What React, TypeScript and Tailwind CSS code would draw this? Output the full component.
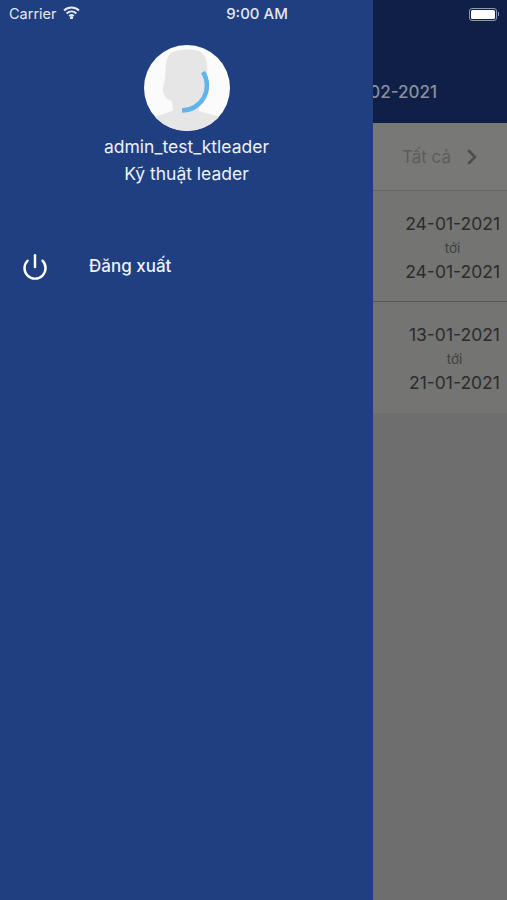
import { ChevronRight, Power } from "lucide-react";

const dateRows = [
  { from: "24-01-2021", to: "24-01-2021" },
  { from: "13-01-2021", to: "21-01-2021" },
];

function StatusBar() {
  return (
    <div className="absolute inset-x-0 top-0 flex h-[28px] items-center justify-between pl-[9px] pr-[8px] text-[#e4e8f0]">
      <div className="flex w-[120px] items-center gap-[7px] text-[14.5px]">
        <span>Carrier</span>
        <svg width="17" height="13" viewBox="0 0 17 13" fill="none" stroke="currentColor" strokeWidth="2" className="-mt-[3px] -ml-[1px]">
          <path d="M1 4.6C5.4.6 11.6.6 16 4.6" />
          <path d="M3.6 7.4c2.9-2.6 6.9-2.6 9.8 0" />
          <path d="M6.2 10c1.4-1.2 3.2-1.2 4.6 0" />
          <circle cx="8.5" cy="11.6" r="0.7" fill="currentColor" />
        </svg>
      </div>
      <span className="ml-[6px] text-[15px] font-medium">9:00 AM</span>
      <div className="flex w-[120px] items-center justify-end">
        <div className="flex h-[13px] w-[28px] items-center rounded-[3px] border border-[#8f9ab5] p-[1px]">
          <div className="h-full w-full rounded-[1.5px] bg-white" />
        </div>
        <div className="ml-[1px] h-[4px] w-[1px] bg-[#8f9ab5]" />
      </div>
    </div>
  );
}

function Avatar() {
  return (
    <div className="h-[86px] w-[86px] overflow-hidden rounded-full bg-[#fbfbfb]">
      <svg width="86" height="86" viewBox="0 0 86 86">
        <path
          d="M27 8C33 4 52 3 58 8C63 12 64 20 63 30C62 42 60 52 55 60L55 66C62 69 74 70 80 74L86 86L0 86L6 74C12 70 24 69 29 65L28 56C24 55 20 52 19 46C18 41 21 38 21 33C22 26 20 14 27 8Z"
          fill="#e6e6e6"
        />
        <path d="M59 27A25 25 0 0 1 38 65.5" fill="none" stroke="#61b3ec" strokeWidth="4.5" />
      </svg>
    </div>
  );
}

function Drawer() {
  return (
    <aside className="flex h-full w-[373px] shrink-0 flex-col bg-[#1f3f80] pt-[45px] text-[#eef1f6]">
      <div className="flex flex-col items-center">
        <Avatar />
        <div className="mt-[6px] text-[17.5px] leading-[20px]">admin_test_ktleader</div>
        <div className="mt-[7px] text-[17.5px] leading-[20px]">Kỹ thuật leader</div>
      </div>
      <div className="mt-[67px] flex h-[32px] items-center pl-[21px]">
        <Power size={28} strokeWidth={2.1} className="text-white" />
        <span className="-mt-[2px] ml-[40px] text-[17px] font-medium leading-[20px]">Đăng xuất</span>
      </div>
    </aside>
  );
}

function BackgroundScreen() {
  return (
    <main className="flex h-full min-w-0 flex-1 flex-col overflow-hidden bg-[#6d6e6d]">
      <div className="flex h-[123px] shrink-0 items-end justify-end bg-[#0f1f47] pb-[18px] pr-[70px]">
        <span className="whitespace-nowrap text-[17px] font-medium text-[#8a8f9c]">01-02-2021</span>
      </div>
      <div className="flex h-[68px] shrink-0 items-center justify-end border-b border-[#666] bg-[#787877] pr-[23px] shadow-[0_2px_3px_rgba(0,0,0,0.2)]">
        <span className="mt-[2px] text-[17px] text-[#5c5c5c]">Tất cả</span>
        <ChevronRight size={24} strokeWidth={2.6} className="ml-[9px] text-[#4d4d4d]" />
      </div>
      {dateRows.map((row) => (
        <div
          key={row.from}
          className="flex h-[111px] shrink-0 flex-col items-end justify-center border-b border-[#555] bg-[#747473] pr-[7px] pt-[3px] text-[#2c2c2c] last:border-b-0"
        >
          <div className="flex flex-col items-center">
            <span className="text-[17.5px] leading-[22px]">{row.from}</span>
            <span className="my-[4px] text-[13.5px] leading-[18px] text-[#404040]">tới</span>
            <span className="text-[17.5px] leading-[22px]">{row.to}</span>
          </div>
        </div>
      ))}
    </main>
  );
}

export default function App() {
  return (
    <div className="relative flex h-[900px] w-[507px] overflow-hidden font-['Inter',sans-serif]">
      <Drawer />
      <BackgroundScreen />
      <StatusBar />
    </div>
  );
}
